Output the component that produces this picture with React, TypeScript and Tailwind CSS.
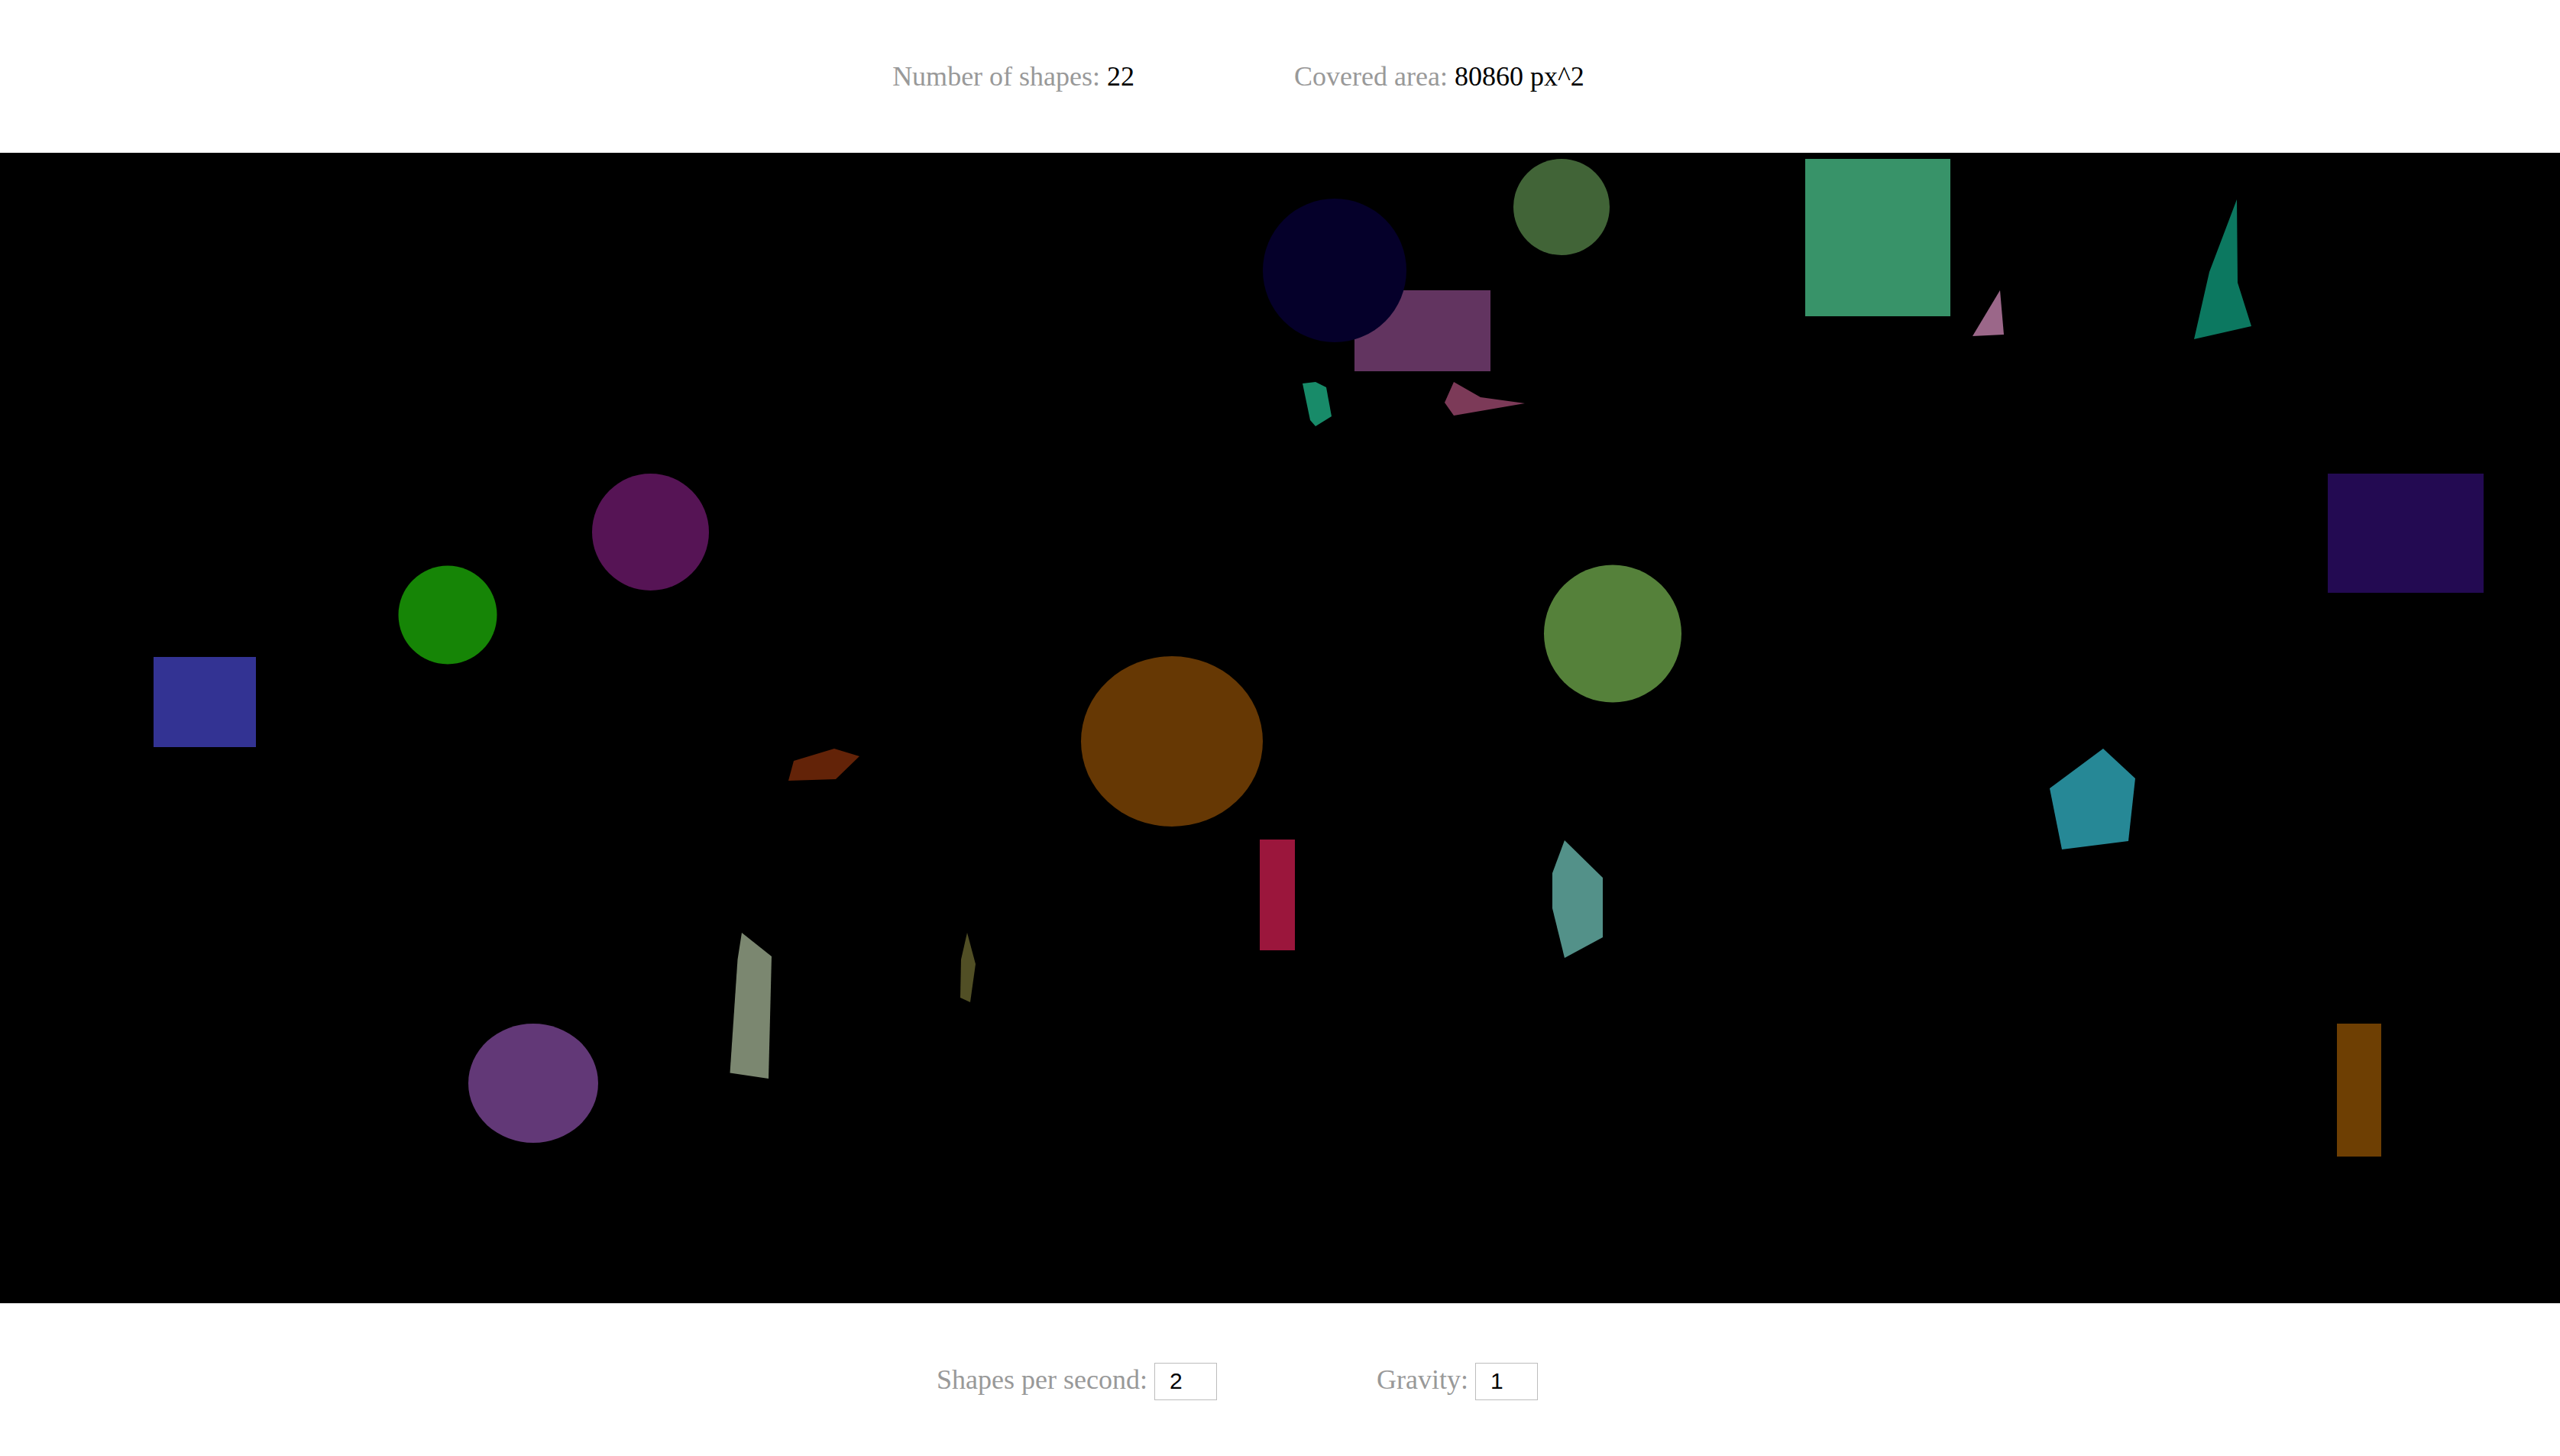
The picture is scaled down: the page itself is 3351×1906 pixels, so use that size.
import React from "react";

type Shape =
  | { k: "c"; cx: number; cy: number; rx: number; ry: number; f: string }
  | { k: "r"; x: number; y: number; w: number; h: number; f: string }
  | { k: "p"; pts: number[][]; f: string };

const OY = 200;

const shapes: Shape[] = [
  { k: "r", x: 1773, y: 380, w: 178, h: 106, f: "#623460" },
  { k: "c", cx: 1747, cy: 354, rx: 94, ry: 94, f: "#05002a" },
  { k: "c", cx: 2044, cy: 271, rx: 63, ry: 63, f: "#416437" },
  { k: "r", x: 2363, y: 208, w: 190, h: 206, f: "#389369" },
  { k: "p", pts: [[2618, 380], [2582, 440], [2623, 438]], f: "#9b6789" },
  { k: "p", pts: [[1705, 502], [1722, 500], [1736, 507], [1743, 545], [1722, 558], [1715, 550]], f: "#188b69" },
  { k: "p", pts: [[1903, 500], [1938, 520], [1996, 528], [1903, 544], [1891, 527]], f: "#7c3a58" },
  { k: "p", pts: [[2928, 261], [2929, 370], [2947, 427], [2872, 444], [2892, 356]], f: "#0c7860" },
  { k: "r", x: 3047, y: 620, w: 204, h: 156, f: "#230a52" },
  { k: "c", cx: 851.5, cy: 696.5, rx: 76.5, ry: 76.5, f: "#561455" },
  { k: "c", cx: 586, cy: 805, rx: 64.5, ry: 64.5, f: "#168506" },
  { k: "r", x: 201, y: 860, w: 134, h: 118, f: "#333393" },
  { k: "p", pts: [[1092, 980], [1125, 990], [1094, 1020], [1032, 1022], [1039, 996]], f: "#632308" },
  { k: "c", cx: 1534, cy: 970.5, rx: 119, ry: 111.5, f: "#663804" },
  { k: "r", x: 1649, y: 1099, w: 46, h: 145, f: "#9b163c" },
  { k: "p", pts: [[2048, 1100], [2098, 1149], [2098, 1227], [2048, 1254], [2032, 1189], [2032, 1143]], f: "#539189" },
  { k: "p", pts: [[971, 1221], [1010, 1252], [1006, 1412], [955.5, 1404.6], [965.5, 1256]], f: "#7b8770" },
  { k: "p", pts: [[1266, 1221], [1277, 1262], [1270, 1312], [1257, 1306], [1258, 1256]], f: "#514f25" },
  { k: "c", cx: 2111, cy: 829.5, rx: 90, ry: 90, f: "#55813a" },
  { k: "p", pts: [[2753, 980], [2795, 1019], [2786, 1101], [2699, 1112], [2683, 1032]], f: "#268896" },
  { k: "r", x: 3059, y: 1340, w: 58, h: 174, f: "#6e3f03" },
  { k: "c", cx: 698, cy: 1418, rx: 85, ry: 78, f: "#623877" },
];

function renderShape(s: Shape, i: number) {
  if (s.k === "c")
    return <ellipse key={i} cx={s.cx} cy={s.cy - OY} rx={s.rx} ry={s.ry} fill={s.f} />;
  if (s.k === "r")
    return <rect key={i} x={s.x} y={s.y - OY} width={s.w} height={s.h} fill={s.f} />;
  return (
    <polygon
      key={i}
      points={s.pts.map(([x, y]) => `${x},${y - OY}`).join(" ")}
      fill={s.f}
    />
  );
}

const serif = { fontFamily: '"Liberation Serif", "Times New Roman", serif' };

export default function App() {
  return (
    <div className="w-[3351px] h-[1906px] bg-white flex flex-col" style={serif}>
      <div className="h-[200px] flex items-center justify-center gap-[209px] pr-[109px] text-[36px]">
        <div className="whitespace-pre">
          <span className="text-[#999999]">Number of shapes: </span>
          <span className="text-black">22</span>
        </div>
        <div className="whitespace-pre">
          <span className="text-[#999999]">Covered area: </span>
          <span className="text-black">80860 px^2</span>
        </div>
      </div>
      <div className="h-[1506px] w-full bg-black">
        <svg width="3351" height="1506" viewBox="0 0 3351 1506" className="block">
          {shapes.map(renderShape)}
        </svg>
      </div>
      <div className="h-[200px] flex items-center justify-center gap-[209px] pr-[112px] text-[36px]">
        <div className="flex items-baseline">
          <span className="text-[#999999] whitespace-pre">Shapes per second: </span>
          <input
            readOnly
            value="2"
            className="w-[82px] h-[49px] border border-[#bdbdbd] pl-[19px] text-[30px] text-black outline-none"
            style={{ fontFamily: '"Liberation Sans", Arial, sans-serif' }}
          />
        </div>
        <div className="flex items-baseline">
          <span className="text-[#999999] whitespace-pre">Gravity: </span>
          <input
            readOnly
            value="1"
            className="w-[82px] h-[49px] border border-[#bdbdbd] pl-[19px] text-[30px] text-black outline-none"
            style={{ fontFamily: '"Liberation Sans", Arial, sans-serif' }}
          />
        </div>
      </div>
    </div>
  );
}
